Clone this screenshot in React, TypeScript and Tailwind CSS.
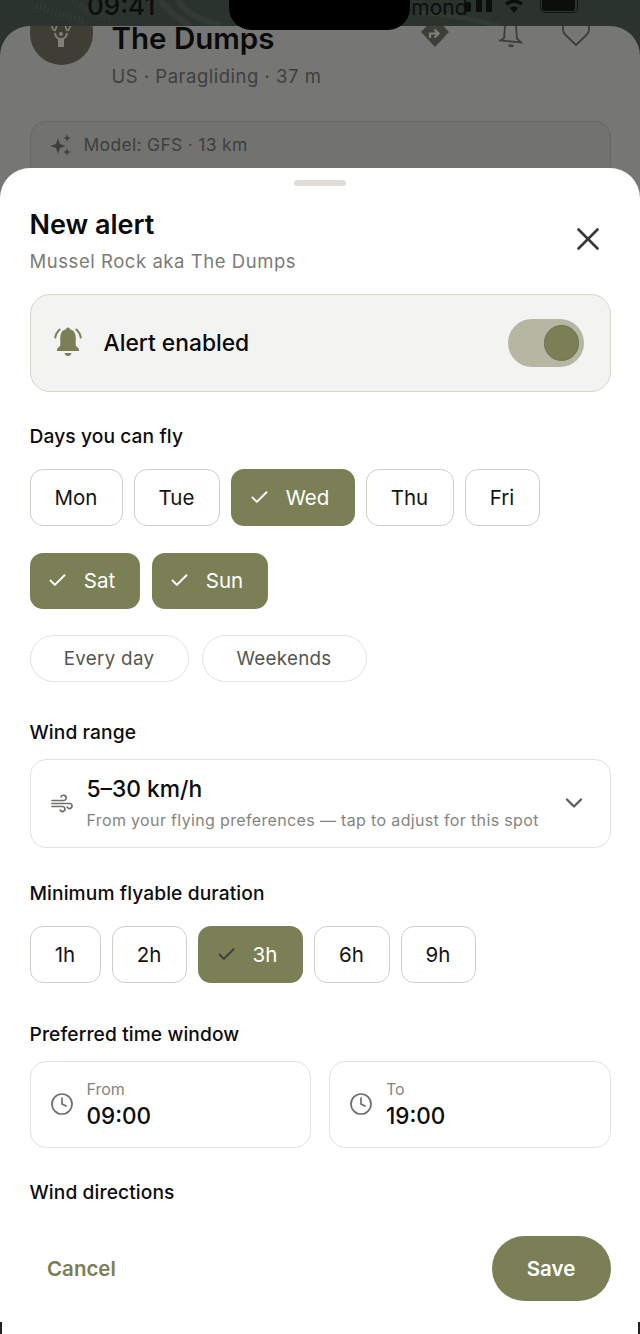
import { Check, ChevronDown, Clock, X } from 'lucide-react';

const OLIVE = '#7a7f55';

const days = [
    { label: 'Mon', on: false, w: 'w-[93px]' },
    { label: 'Tue', on: false, w: 'w-[86px]' },
    { label: 'Wed', on: true, w: 'w-[124px]' },
    { label: 'Thu', on: false, w: 'w-[88px]' },
    { label: 'Fri', on: false, w: 'w-[75px]' },
];

const durations = [
    { label: '1h', on: false, w: 'w-[71px]' },
    { label: '2h', on: false, w: 'w-[75px]' },
    { label: '3h', on: true, w: 'w-[105px]' },
    { label: '6h', on: false, w: 'w-[76px]' },
    { label: '9h', on: false, w: 'w-[75px]' },
];

function Chip({ label, on, w, darkCheck }: { label: string; on: boolean; w: string; darkCheck?: boolean }) {
    if (on) {
        return (
            <div className={`${w} h-[56.5px] shrink-0 rounded-[13px] bg-[#7a7f55] flex items-center justify-center gap-[16px] text-[20.5px] text-white`}>
                <Check size={21} strokeWidth={2.2} className={`-ml-[7px] ${darkCheck ? 'text-[#3c4038]' : 'text-white'}`} />
                <span className="pt-[2px]">{label}</span>
            </div>
        );
    }
    return (
        <div className={`${w} h-[56.5px] shrink-0 rounded-[13px] border-[1.5px] border-[#d0cfc5] flex items-center justify-center pt-[2px] text-[20.5px] text-[#141414]`}>
            {label}
        </div>
    );
}

function Label({ children }: { children: string }) {
    return <div className="text-[19.2px] leading-[24px] font-medium text-[#0d0d0d] tracking-[0.1px]">{children}</div>;
}

function WindIcon() {
    return (
        <svg width="24" height="24" viewBox="0 0 24 24" fill="none" stroke="#6f6f6a" strokeWidth="1.7" strokeLinecap="round">
            <path d="M2 9.500h11.500a2.600 2.600 0 1 0-2.400-3.600" />
            <path d="M2 12.500h17.500a2.500 2.500 0 1 1-2.300 3.500" />
            <path d="M2 15.500h10.500a2.500 2.500 0 1 1-2.300 3.600" />
        </svg>
    );
}

function BellRingFilled() {
    return (
        <svg width="30" height="34" viewBox="0 0 30 34" fill="#7a7f55">
            <path d="M15 1.500c1.100 0 1.900.8 1.900 1.800 3.800.9 5.800 4 5.800 8v8.200l3.300 3.600v1.900H4v-1.900l3.300-3.600v-8.200c0-4 2-7.100 5.800-8 0-1 .8-1.800 1.900-1.800z" />
            <path d="M11.500 27h7c-.4 2-1.800 3-3.500 3s-3.100-1-3.500-3z" />
            <path d="M6.500 3.500C4.400 5.500 2.800 8 2.200 11.500M23.500 3.500C25.600 5.500 27.200 8 27.800 11.500" fill="none" stroke="#7a7f55" strokeWidth="2" strokeLinecap="round" />
        </svg>
    );
}

function TimeCard({ label, value }: { label: string; value: string }) {
    return (
        <div className="flex-1 h-[87px] rounded-[16px] border-[1.5px] border-[#e3e2dc] flex items-center pl-[19px] gap-[13px]">
            <Clock size={24} strokeWidth={1.7} className="text-[#6f6f6a]" />
            <div className="flex flex-col">
                <span className="text-[16px] leading-[22px] text-[#85857f]">{label}</span>
                <span className="mt-[1px] text-[22.5px] leading-[30px] font-medium text-[#0d0d0d]">{value}</span>
            </div>
        </div>
    );
}

export default function App() {
    return (
        <div className="relative w-[640px] h-[1334px] overflow-hidden bg-[#2a332e] font-['Inter',sans-serif]">
            <div className="h-[26px] overflow-hidden relative flex items-start text-black">
                <svg width="640" height="26" viewBox="0 0 640 26" className="absolute left-0 top-0" fill="none">
                    <path d="M160 0c6 8 12 14 30 26M178 0c4 10 16 18 44 26" stroke="#323a32" strokeWidth="6" />
                    <path d="M420 12c20 2 50 6 80 14" stroke="#323a32" strokeWidth="5" />
                    <path d="M36 6l50 16M72 2l40 18" stroke="#323b34" strokeWidth="7" strokeDasharray="1.500 2.500" />
                </svg>
                <span className="relative ml-[87px] -mt-[11px] text-[26px] leading-[34px] font-medium text-[#0a0f0c]">09:41</span>
                <span className="relative ml-[256px] -mt-[5px] text-[21px] leading-[26px] text-[#0d0f0d]">mond</span>
                <svg width="30" height="14" viewBox="0 0 30 14" className="relative -ml-[3px]" fill="#0a0f0c">
                    <rect x="0" y="2" width="6" height="10" rx="1.500" />
                    <rect x="11" y="-2" width="6" height="14" rx="1.500" />
                    <rect x="21" y="-2" width="6" height="14" rx="1.500" />
                </svg>
                <svg width="20" height="14" viewBox="0 0 20 14" className="relative ml-[9px]" fill="#0a0f0c">
                    <path d="M10 13L6 8c2.400-2 5.600-2 8 0z" />
                    <path d="M1 3c5-4.500 13-4.500 18 0l-2.500 2.500c-3.800-3.200-9.200-3.200-13 0z" />
                </svg>
                <div className="relative ml-[16px] -mt-[8px] w-[38px] h-[21px] rounded-[5px] border-[1.5px] border-[#111512] p-[1.5px]">
                    <div className="w-full h-full rounded-[3px] bg-[#0a0f0c]" />
                </div>
            </div>

            {/* notch */}
            <div className="absolute left-[229px] top-0 w-[181px] h-[30px] bg-black rounded-b-[22px]" />

            {/* dimmed page behind the sheet */}
            <div className="h-[200px] bg-[#767675] rounded-t-[30px] overflow-hidden px-[29.5px]">
                <div className="flex items-start -mt-[26px]">
                    <div className="w-[63px] h-[65px] rounded-full bg-[#3e3e34] flex items-end justify-center pb-[16px] shrink-0">
                        <svg width="26" height="24" viewBox="0 0 26 24" fill="none" stroke="#808078" strokeWidth="1.600">
                            <path d="M3 0l3 6M9 0L7 6M17 0l2 6M23 0l-3 6" />
                            <circle cx="13" cy="9" r="2" fill="#808078" stroke="none" />
                            <path d="M7 8c.5 4 2.500 6 6 6s5.500-2 6-6" strokeWidth="2" />
                            <rect x="10" y="14" width="6" height="8" fill="#808078" stroke="none" />
                        </svg>
                    </div>
                    <div className="ml-[19px] flex-1">
                        <div className="pt-[20px] text-[29.5px] leading-[37px] font-semibold text-[#0a0a0a]">The Dumps</div>
                        <div className="mt-[6px] text-[18.5px] leading-[26px] text-[#3f3f3d] tracking-[0.5px]">US · Paragliding · 37 m</div>
                    </div>
                    <div className="flex items-start mt-[26px] mr-[20px]">
                        <svg width="30" height="21" viewBox="0 0 30 21" fill="#3e3e38">
                            <path d="M15 -9l14 15-14 15-14-15z" />
                            <path d="M10 12V7.500h7.500M14.500 3.500L18.500 7.500l-4 4" stroke="#808078" strokeWidth="2.200" fill="none" />
                        </svg>
                        <svg width="24" height="21" viewBox="0 0 24 21" className="ml-[49px]" fill="none" stroke="#3e3e38" strokeWidth="1.800">
                            <path d="M6 0L5 12.500 1 14.500 22 16.500 18 12.500 17 0" />
                            <path d="M9.500 19.500l5 .5" strokeWidth="2.400" />
                        </svg>
                        <svg width="30" height="20" viewBox="0 0 30 20" className="ml-[38px]" fill="none" stroke="#3e3e38" strokeWidth="1.800">
                            <path d="M2 0v4c0 2 1 3.500 3 5.500l10 9.500 10-9.500c2-2 3-3.500 3-5.500V0" />
                        </svg>
                    </div>
                </div>
                <div className="mt-[32px] h-[60px] rounded-[16px] border-[1.5px] border-[#676765] bg-[#727271] flex items-start pt-[11px] pl-[18px] gap-[11px]">
                    <svg width="24" height="24" viewBox="0 0 24 24" fill="#3f3f3d">
                        <path d="M9 5l2 6 6 2-6 2-2 6-2-6-6-2 6-2z" />
                        <path d="M18 1l1 3 3 1-3 1-1 3-1-3-3-1 3-1zM18 15l1 3 3 1-3 1-1 3-1-3-3-1 3-1z" />
                    </svg>
                    <span className="text-[17.5px] leading-[24px] text-[#3f3f3d] tracking-[0.3px]">Model: GFS · 13 km</span>
                </div>
            </div>

            {/* bottom sheet */}
            <div className="absolute inset-x-0 top-[168px] bottom-0 bg-white rounded-t-[30px] flex flex-col px-[29.5px]">
                <div className="mt-[12px] w-[52px] h-[6px] rounded-full bg-[#dedcd5] self-center shrink-0" />

                <div className="mt-[22px] flex justify-between items-start">
                    <div>
                        <div className="text-[27px] leading-[34px] font-semibold text-[#0a0a0a]">New alert</div>
                        <div className="mt-[6px] text-[18.5px] leading-[26px] tracking-[0.55px] text-[#7c7c76]">Mussel Rock aka The Dumps</div>
                    </div>
                    <X size={38} strokeWidth={1.7} className="mt-[12px] mr-[3.5px] text-[#3a3a38]" />
                </div>

                <div className="mt-[20px] h-[98px] shrink-0 rounded-[20px] border-[1.5px] border-[#d6d5ca] bg-[#f3f3f1] flex items-center pl-[22px] pr-[26px]">
                    <BellRingFilled />
                    <span className="ml-[21px] flex-1 pt-[1px] text-[22.8px] font-medium text-[#0a0a0a]">Alert enabled</span>
                    <div className="w-[76px] h-[48px] rounded-full bg-[#b5b7a3] flex items-center justify-end pr-[5px]">
                        <div className="w-[35px] h-[36px] rounded-full bg-[#7a7f55] border border-[#6e7350]" />
                    </div>
                </div>

                <div className="mt-[32px]"><Label>Days you can fly</Label></div>
                <div className="mt-[21px] flex gap-[11px]">
                    {days.map((d) => <Chip key={d.label} {...d} />)}
                </div>
                <div className="mt-[27px] flex gap-[12px]">
                    <Chip label="Sat" on w="w-[110px]" />
                    <Chip label="Sun" on w="w-[116px]" />
                </div>
                <div className="mt-[26px] flex gap-[13px]">
                    <div className="w-[159px] h-[47px] rounded-full border-[1.5px] border-[#e3e2dc] flex items-center justify-center pt-[2px] text-[18.8px] tracking-[0.3px] text-[#55554f]">Every day</div>
                    <div className="w-[165px] h-[47px] rounded-full border-[1.5px] border-[#e3e2dc] flex items-center justify-center pt-[2px] text-[18.8px] tracking-[0.3px] text-[#55554f]">Weekends</div>
                </div>

                <div className="mt-[38px]"><Label>Wind range</Label></div>
                <div className="mt-[14.5px] h-[89.5px] shrink-0 rounded-[16px] border-[1.5px] border-[#e3e2dc] flex items-center pl-[19px] pr-[22px]">
                    <WindIcon />
                    <div className="ml-[13px] flex-1 flex flex-col">
                        <span className="text-[22.8px] leading-[30px] font-medium text-[#0d0d0d]">5–30 km/h</span>
                        <span className="mt-[4px] text-[16px] leading-[24px] tracking-[0.35px] text-[#85857f]">From your flying preferences — tap to adjust for this spot</span>
                    </div>
                    <ChevronDown size={28} strokeWidth={2} className="text-[#5b5b57]" />
                </div>

                <div className="mt-[33px]"><Label>Minimum flyable duration</Label></div>
                <div className="mt-[21px] flex gap-[11px]">
                    {durations.map((d) => <Chip key={d.label} {...d} darkCheck />)}
                </div>

                <div className="mt-[39px]"><Label>Preferred time window</Label></div>
                <div className="mt-[15px] flex gap-[18px]">
                    <TimeCard label="From" value="09:00" />
                    <TimeCard label="To" value="19:00" />
                </div>

                <div className="mt-[32px]"><Label>Wind directions</Label></div>

                <div className="mt-auto mb-[33px] flex items-center justify-between">
                    <span className="ml-[17.5px] pt-[1px] text-[20.5px] font-semibold" style={{ color: OLIVE }}>Cancel</span>
                    <div className="w-[119px] h-[65px] rounded-full bg-[#7a7f55] flex items-center justify-center pt-[1px] text-[20.5px] font-semibold text-white">Save</div>
                </div>
            </div>

            {/* slivers of the phone corner at the very bottom */}
            <div className="absolute left-0 bottom-0 w-[2px] h-[12px] bg-[#222]" />
            <div className="absolute right-0 bottom-0 w-[2px] h-[12px] bg-[#222]" />
        </div>
    );
}
